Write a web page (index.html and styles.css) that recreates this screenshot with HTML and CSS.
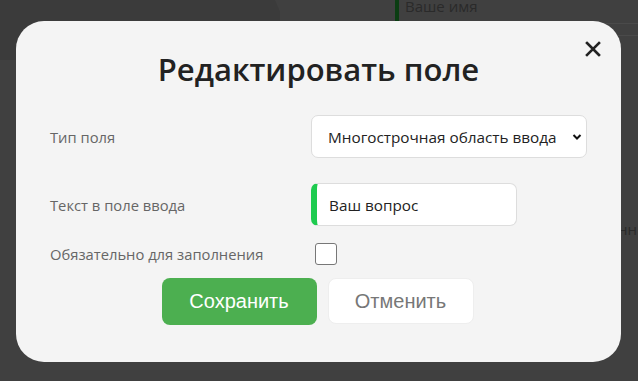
FILE: index.html
```html
<!DOCTYPE html>
<html lang="ru">
<head>
<meta charset="utf-8">
<link rel="stylesheet" href="styles.css">
</head>
<body>
<div class="page">
  <div class="side"></div>
  <div class="main">
    <div class="field-row">
      <div class="field-input">Ваше имя</div>
    </div>
    <div class="line"></div>
    <div class="spacer1"></div>
    <div class="line"></div>
    <div class="ghost-text">нн</div>
  </div>
</div>
<div class="overlay">
  <div class="modal">
    <button class="close" aria-label="Закрыть">
      <svg width="16" height="16" viewBox="0 0 16 16"><path d="M2 2 L14 14 M14 2 L2 14" stroke="#222" stroke-width="2.6" stroke-linecap="square"/></svg>
    </button>
    <h1 class="title">Редактировать поле</h1>
    <div class="form">
      <div class="row row-type">
        <label class="label">Тип поля</label>
        <div class="select">
          <span>Многострочная область ввода</span>
          <svg class="chev" width="10" height="8" viewBox="0 0 10 8"><path d="M1.5 2 L5 5.5 L8.5 2" fill="none" stroke="#111" stroke-width="2"/></svg>
        </div>
      </div>
      <div class="row row-text">
        <label class="label">Текст в поле ввода</label>
        <div class="input">Ваш вопрос</div>
      </div>
      <div class="row row-req">
        <label class="label">Обязательно для заполнения</label>
        <span class="checkbox"></span>
      </div>
    </div>
    <div class="actions">
      <button class="btn btn-save">Сохранить</button>
      <button class="btn btn-cancel">Отменить</button>
    </div>
  </div>
</div>
</body>
</html>
```
FILE: styles.css
```css
* { box-sizing: border-box; }
html, body { margin: 0; padding: 0; }
body {
  width: 638px;
  height: 381px;
  overflow: hidden;
  background: #404040;
  font-family: "Open Sans", "Noto Sans", sans-serif;
}
.page {
  display: flex;
  height: 381px;
}
.side {
  width: 280px;
  background: #3b3b3b;
  clip-path: polygon(0 0, 275px 0, 300px 60px, 0 60px, 0 100%, 0 100%);
}
.main {
  flex: 1;
  padding-left: 115px;
  display: flex;
  flex-direction: column;
}
.field-row {
  height: 23px;
  display: flex;
}
.field-input {
  border-left: 4px solid #0b3d12;
  padding-left: 6px;
  margin-top: -6px;
  height: 29px;
  color: #2a2a2a;
  font-size: 15px;
  line-height: 24px;
}
.line { height: 1px; background: #4a4a4a; }
.spacer1 { height: 11px; }
.ghost-text {
  margin-top: 183px;
  padding-left: 223px;
  color: #2a2a2a;
  font-size: 15px;
}
.overlay {
  position: fixed;
  inset: 0;
  padding: 21px 17px 19px 16px;
  display: flex;
}
.modal {
  position: relative;
  flex: 1;
  background: #f4f4f4;
  border-radius: 28px;
  padding: 30px 34px 0 34px;
}
.close {
  position: absolute;
  top: 20px;
  right: 20px;
  width: 16px;
  height: 16px;
  padding: 0;
  border: 0;
  background: none;
  display: flex;
}
.title {
  margin: 0;
  text-align: center;
  font-size: 31px;
  font-weight: 600;
  color: #222;
  line-height: 36px;
}
.form {
  margin-top: 28px;
  display: flex;
  flex-direction: column;
}
.row {
  display: grid;
  grid-template-columns: 261px auto;
  align-items: center;
}
.label {
  color: #666;
  font-size: 14.75px;
}
.select {
  width: 276px;
  height: 43px;
  background: #fff;
  border: 1px solid #ddd;
  border-radius: 7px;
  display: flex;
  align-items: center;
  justify-content: space-between;
  padding: 0 4px 0 16px;
  color: #222;
  font-size: 15.3px;
}
.row-text { margin-top: 25px; }
.input {
  width: 206px;
  height: 43px;
  background: #fff;
  border: 1px solid #ddd;
  border-left: 6px solid #1ecb4f;
  border-radius: 7px;
  display: flex;
  align-items: center;
  padding-left: 12px;
  color: #222;
  font-size: 15.3px;
}
.row-req { margin-top: 17px; }
.checkbox {
  margin-left: 4px;
  width: 22px;
  height: 22px;
  border: 1px solid #777;
  border-radius: 3px;
  background: #fff;
}
.actions {
  margin-top: 13px;
  display: flex;
  justify-content: center;
  gap: 11px;
  padding-right: 2px;
}
.btn {
  font-family: "Liberation Sans", Arial, sans-serif;
  font-size: 20px;
  border-radius: 8px;
  cursor: pointer;
}
.btn-save {
  width: 155px;
  height: 47px;
  background: #4caf50;
  color: #fff;
  border: 0;
}
.btn-cancel {
  width: 146px;
  height: 46px;
  background: #fff;
  color: #777;
  border: 1px solid #eee;
}
```
